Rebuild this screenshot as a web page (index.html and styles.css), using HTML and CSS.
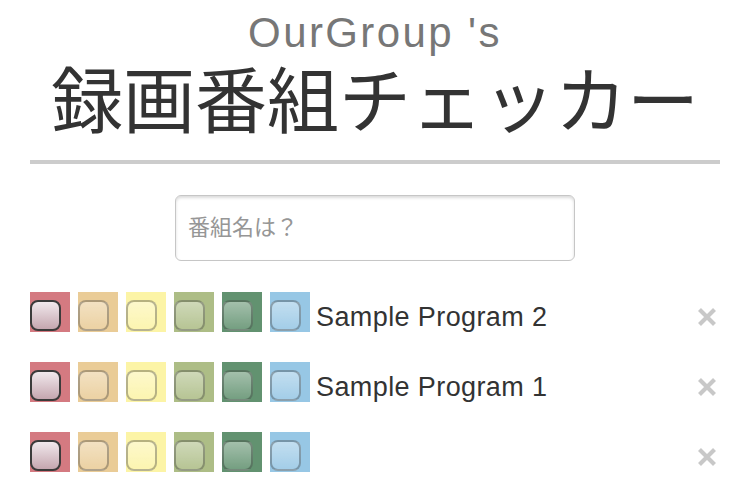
FILE: index.html
```html
<!DOCTYPE html>
<html lang="ja">
<head>
<meta charset="utf-8">
<title>録画番組チェッカー</title>
<link rel="stylesheet" href="styles.css">
</head>
<body>
<div class="page">
  <header class="header">
    <h2 class="brand">OurGroup 's</h2>
    <h1 class="title">録画番組チェッカー</h1>
  </header>
  <div class="search">
    <input class="search-input" type="text" placeholder="番組名は？">
  </div>
  <ul class="list">
    <li class="row">
      <label class="swatch red"><input type="checkbox" class="check active"></label>
      <label class="swatch tan"><input type="checkbox" class="check"></label>
      <label class="swatch yellow"><input type="checkbox" class="check"></label>
      <label class="swatch olive"><input type="checkbox" class="check"></label>
      <label class="swatch green"><input type="checkbox" class="check"></label>
      <label class="swatch blue"><input type="checkbox" class="check"></label>
      <span class="name">Sample Program 2</span>
      <span class="close"><svg viewBox="0 0 20 20" width="20" height="20"><path d="M2.5 2.5 L17.5 17.5 M17.5 2.5 L2.5 17.5" stroke="#c8c8c8" stroke-width="4.2" stroke-linecap="butt"/></svg></span>
    </li>
    <li class="row">
      <label class="swatch red"><input type="checkbox" class="check active"></label>
      <label class="swatch tan"><input type="checkbox" class="check"></label>
      <label class="swatch yellow"><input type="checkbox" class="check"></label>
      <label class="swatch olive"><input type="checkbox" class="check"></label>
      <label class="swatch green"><input type="checkbox" class="check"></label>
      <label class="swatch blue"><input type="checkbox" class="check"></label>
      <span class="name">Sample Program 1</span>
      <span class="close"><svg viewBox="0 0 20 20" width="20" height="20"><path d="M2.5 2.5 L17.5 17.5 M17.5 2.5 L2.5 17.5" stroke="#c8c8c8" stroke-width="4.2" stroke-linecap="butt"/></svg></span>
    </li>
    <li class="row">
      <label class="swatch red"><input type="checkbox" class="check active"></label>
      <label class="swatch tan"><input type="checkbox" class="check"></label>
      <label class="swatch yellow"><input type="checkbox" class="check"></label>
      <label class="swatch olive"><input type="checkbox" class="check"></label>
      <label class="swatch green"><input type="checkbox" class="check"></label>
      <label class="swatch blue"><input type="checkbox" class="check"></label>
      <span class="name"></span>
      <span class="close"><svg viewBox="0 0 20 20" width="20" height="20"><path d="M2.5 2.5 L17.5 17.5 M17.5 2.5 L2.5 17.5" stroke="#c8c8c8" stroke-width="4.2" stroke-linecap="butt"/></svg></span>
    </li>
  </ul>
</div>
</body>
</html>
```
FILE: styles.css
```css
* { box-sizing: border-box; }

html, body {
  margin: 0;
  padding: 0;
  background: #ffffff;
}

body {
  font-family: "Liberation Sans", "Noto Sans CJK JP", sans-serif;
  color: #333333;
}

.page {
  padding: 0 30px;
}

.header {
  text-align: center;
  border-bottom: 4px solid #cccccc;
  padding-bottom: 24px;
}

.brand {
  margin: 10px 0 0;
  font-size: 42px;
  line-height: 46px;
  font-weight: normal;
  color: #777777;
  letter-spacing: 2.4px;
}

.title {
  margin: 0;
  font-family: "Noto Sans CJK JP", "Liberation Sans", sans-serif;
  font-size: 72px;
  line-height: 80px;
  font-weight: normal;
  color: #333333;
}

.search {
  display: flex;
  justify-content: center;
  margin-top: 31px;
}

.search-input {
  width: 400px;
  height: 66px;
  border: 1.5px solid #c6c6c6;
  border-radius: 6px;
  box-shadow: inset 0 2px 3px rgba(0, 0, 0, 0.14);
  padding: 0 12px;
  font-family: "Liberation Sans", "Noto Sans CJK JP", sans-serif;
  font-size: 22px;
  color: #333333;
  outline: none;
}

.search-input::placeholder {
  color: #969696;
}

.list {
  list-style: none;
  margin: 31px 0 0;
  padding: 0;
}

.row {
  display: flex;
  align-items: flex-end;
  height: 40px;
  margin-bottom: 30px;
}

.swatch {
  flex: none;
  width: 40px;
  height: 40px;
  margin-right: 8px;
  display: flex;
  align-items: flex-end;
}

.swatch.blue { margin-right: 0; }

.red { background: #d47a81; }
.tan { background: #eacc97; }
.yellow { background: #fcf4a6; }
.olive { background: #adbd86; }
.green { background: #629270; }
.blue { background: #97c7e5; }

.check {
  -webkit-appearance: none;
  appearance: none;
  width: 31px;
  height: 31px;
  margin: 0 0 1px 0;
  border-radius: 8px;
  border: 2px solid rgba(0, 0, 0, 0.28);
  background: linear-gradient(rgba(255, 255, 255, 0.42), rgba(255, 255, 255, 0.12));
}

.check.active {
  border-color: #3b3b3b;
  background: linear-gradient(#f1e9ed, #c5a6af);
}

.name {
  margin-left: 6px;
  font-size: 27px;
  line-height: 30px;
  letter-spacing: 0.4px;
  color: #333333;
}

.close {
  margin-left: auto;
  margin-right: 3px;
  margin-bottom: 5px;
  width: 20px;
  height: 20px;
  display: flex;
}
```
